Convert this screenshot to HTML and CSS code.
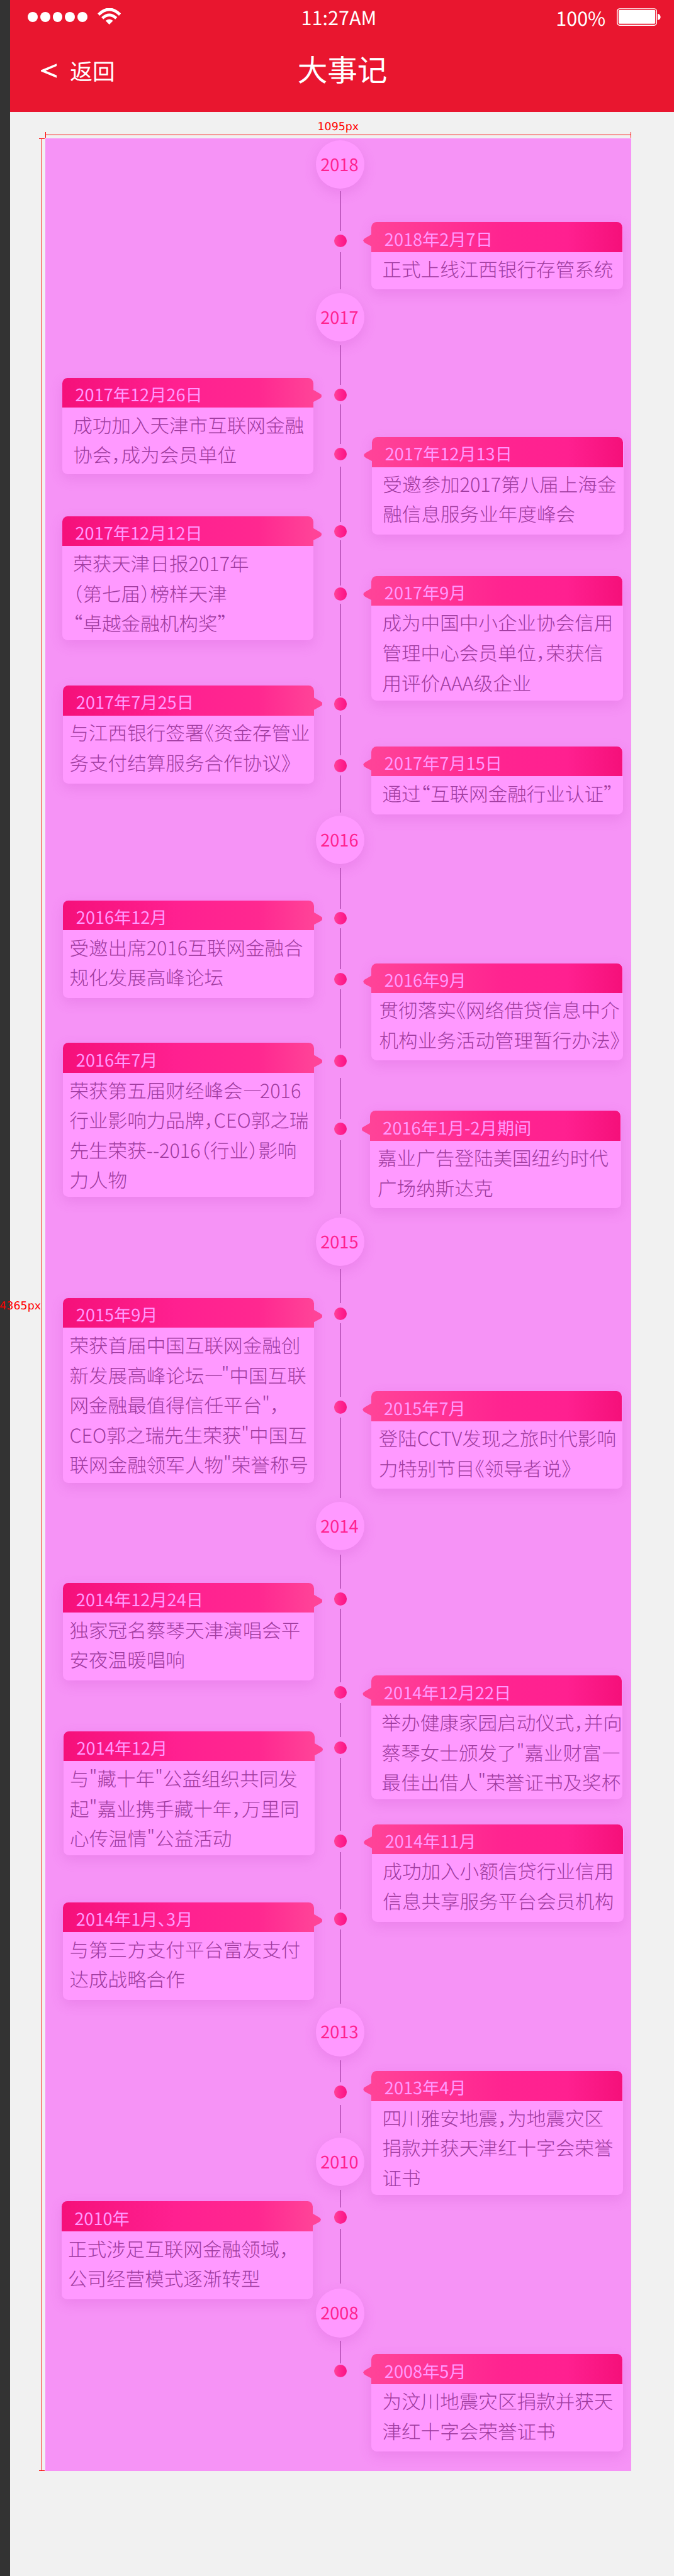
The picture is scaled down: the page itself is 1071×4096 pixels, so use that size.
FILE: index.html
```html
<!DOCTYPE html>
<html lang="zh-CN">
<head>
<meta charset="utf-8">
<title>大事记</title>
<link rel="stylesheet" href="styles.css">
</head>
<body>
<div class="edge"></div>
<div class="screen">
  <header class="topbar">
    <div class="status">
      <div class="signal">
        <i></i><i></i><i></i><i></i><i></i>
        <svg class="wifi" viewBox="0 0 44 31">
          <path d="M2 12 Q22 -7.500 42 12" fill="none" stroke="#fff" stroke-width="5.600"/>
          <path d="M9 18.800 Q22 6.600 35 18.800" fill="none" stroke="#fff" stroke-width="5.400"/>
          <path d="M15 23.500 Q22 17.500 29 23.500 L22 30.500 Z" fill="#fff"/>
        </svg>
      </div>
      <div class="clock">11:27AM</div>
      <div class="power">
        <span>100%</span>
        <svg class="battery" viewBox="0 0 83 33">
          <rect x="1" y="1" width="73.500" height="31" rx="4.500" fill="none" stroke="#fff" stroke-width="1.700"/>
          <rect x="3.500" y="3.600" width="68.500" height="25.400" rx="1.500" fill="#fff"/>
          <path d="M76.500 10.500 A5.500 6 0 0 1 76.500 22.500 Z" fill="#fff"/>
        </svg>
      </div>
    </div>
    <nav class="nav">
      <div class="back">
        <svg class="chevron" viewBox="0 0 30 27"><polyline points="33,1 3,13.500 33,26" fill="none" stroke="#fff" stroke-width="4.300"/></svg>
        <span>返回</span>
      </div>
      <h1>大事记</h1>
    </nav>
  </header>

  <div class="ruler-x"><span>1095px</span><div class="bar"></div></div>

  <div class="stage">
    <div class="ruler-y"><span>4365px</span></div>
    <main class="timeline">
      <section class="col left">
        <article class="card"><h2>2017年12月26日</h2><p>成功加入天津市互联网金融<br>协会，成为会员单位</p></article>
        <article class="card"><h2>2017年12月12日</h2><p>荣获天津日报2017年<br>（第七届）榜样天津<br>“卓越金融机构奖”</p></article>
        <article class="card near"><h2>2017年7月25日</h2><p>与江西银行签署《资金存管业<br>务支付结算服务合作协议》</p></article>
        <article class="card near"><h2>2016年12月</h2><p>受邀出席2016互联网金融合<br>规化发展高峰论坛</p></article>
        <article class="card near"><h2>2016年7月</h2><p>荣获第五届财经峰会<b>—</b>2016<br>行业影响力品牌，CEO郭之瑞<br>先生荣获--2016（行业）影响<br>力人物</p></article>
        <article class="card near"><h2>2015年9月</h2><p>荣获首届中国互联网金融创<br>新发展高峰论坛<b>—</b>"中国互联<br>网金融最值得信任平台"，<br>CEO郭之瑞先生荣获"中国互<br>联网金融领军人物"荣誉称号</p></article>
        <article class="card near"><h2>2014年12月24日</h2><p>独家冠名蔡琴天津演唱会平<br>安夜温暖唱响</p></article>
        <article class="card near"><h2>2014年12月</h2><p>与"藏十年"公益组织共同发<br>起"嘉业携手藏十年，万里同<br>心传温情"公益活动</p></article>
        <article class="card near"><h2>2014年1月、3月</h2><p>与第三方支付平台富友支付<br>达成战略合作</p></article>
        <article class="card near"><h2>2010年</h2><p>正式涉足互联网金融领域，<br>公司经营模式逐渐转型</p></article>
      </section>

      <section class="axis">
        <div class="year">2018</div><i class="seg"></i><i class="dot"></i><i class="seg"></i>
        <div class="year">2017</div><i class="seg"></i><i class="dot"></i><i class="seg"></i><i class="dot"></i><i class="seg"></i><i class="dot"></i><i class="seg"></i><i class="dot"></i><i class="seg"></i><i class="dot"></i><i class="seg"></i><i class="dot"></i><i class="seg"></i>
        <div class="year">2016</div><i class="seg"></i><i class="dot"></i><i class="seg"></i><i class="dot"></i><i class="seg"></i><i class="dot"></i><i class="seg"></i><i class="dot"></i><i class="seg"></i>
        <div class="year">2015</div><i class="seg"></i><i class="dot"></i><i class="seg"></i><i class="dot"></i><i class="seg"></i>
        <div class="year">2014</div><i class="seg"></i><i class="dot"></i><i class="seg"></i><i class="dot"></i><i class="seg"></i><i class="dot"></i><i class="seg"></i><i class="dot"></i><i class="seg"></i><i class="dot"></i><i class="seg"></i>
        <div class="year">2013</div><i class="seg"></i><i class="dot"></i><i class="seg"></i>
        <div class="year">2010</div><i class="seg"></i><i class="dot"></i><i class="seg"></i>
        <div class="year">2008</div><i class="seg"></i><i class="dot"></i>
      </section>

      <section class="col right">
        <article class="card"><h2>2018年2月7日</h2><p>正式上线江西银行存管系统</p></article>
        <article class="card"><h2>2017年12月13日</h2><p>受邀参加2017第八届上海金<br>融信息服务业年度峰会</p></article>
        <article class="card"><h2>2017年9月</h2><p>成为中国中小企业协会信用<br>管理中心会员单位，荣获信<br>用评价AAA级企业</p></article>
        <article class="card"><h2>2017年7月15日</h2><p>通过“互联网金融行业认证”</p></article>
        <article class="card near"><h2>2016年9月</h2><p>贯彻落实《网络借贷信息中介<br>机构业务活动管理暂行办法》</p></article>
        <article class="card near"><h2>2016年1月-2月期间</h2><p>嘉业广告登陆美国纽约时代<br>广场纳斯达克</p></article>
        <article class="card near"><h2>2015年7月</h2><p>登陆CCTV发现之旅时代影响<br>力特别节目《领导者说》</p></article>
        <article class="card"><h2>2014年12月22日</h2><p>举办健康家园启动仪式，并向<br>蔡琴女士颁发了"嘉业财富<b>—</b><br>最佳出借人"荣誉证书及奖杯</p></article>
        <article class="card"><h2>2014年11月</h2><p>成功加入小额信贷行业信用<br>信息共享服务平台会员机构</p></article>
        <article class="card"><h2>2013年4月</h2><p>四川雅安地震，为地震灾区<br>捐款并获天津红十字会荣誉<br>证书</p></article>
        <article class="card"><h2>2008年5月</h2><p>为汶川地震灾区捐款并获天<br>津红十字会荣誉证书</p></article>
      </section>
    </main>
  </div>
</div>
</body>
</html>
```

FILE: styles.css
```css
/* 1rem = 100 design pixels */
html { font-size: 84.965px; }
* { box-sizing: border-box; margin: 0; padding: 0; }
body {
  display: flex;
  width: 1071px;
  height: 4096px;
  overflow: hidden;
  background: #f1f1f1;
  font-family: "Noto Sans CJK SC", "Noto Sans", sans-serif;
  font-size: .36rem;
  text-rendering: geometricPrecision;
}
i { display: block; }
svg { display: block; }

.edge { flex: none; width: .19rem; background: #333; }
.screen { flex: 1; min-width: 0; }

/* top bar */
.topbar { height: 2.09rem; background: #e9162f; color: #fff; }
.status { display: grid; grid-template-columns: 1fr auto 1fr; height: .68rem; padding: 0 .24rem 0 .33rem; }
.signal { display: flex; align-items: flex-start; gap: .045rem; padding-top: .22rem; }
.signal i { width: .187rem; height: .187rem; border-radius: 50%; background: #fff; }
.wifi { width: .44rem; height: .31rem; margin: -.07rem 0 0 .14rem; }
.clock { line-height: .52rem; padding-top: .063rem; margin-right: .21rem; }
.power { display: flex; justify-content: flex-end; gap: .21rem; line-height: .52rem; padding-top: .065rem; }
.battery { width: .83rem; height: .33rem; margin-top: .083rem; }
.nav { display: grid; grid-template-columns: 1fr auto 1fr; align-items: start; padding: 0 0 0 .57rem; }
.back { display: flex; align-items: flex-start; gap: .25rem; font-size: .42rem; line-height: .6rem; padding-top: .34rem; }
.chevron { width: .3rem; height: .27rem; margin-top: .17rem; }
.nav h1 { font-size: .56rem; font-weight: 400; line-height: .8rem; padding-top: .205rem; margin-right: .56rem; }

/* measurement rulers */
.ruler-x, .ruler-y { color: #f00; font: .205rem/.24rem "DejaVu Sans", sans-serif; }
.ruler-x { height: .5rem; padding: .172rem .8rem 0 .653rem; text-align: center; }
.ruler-x span { display: block; }
.ruler-x .bar { height: .11rem; margin-top: -.03rem; border: solid #f00; border-width: 0 1px; background: linear-gradient(#f00, #f00) center / 100% 1px no-repeat; }
.stage { display: flex; }
.ruler-y {
  position: relative;
  flex: none;
  width: .11rem;
  margin: 0 .01rem 0 .54rem;
  border: solid #f00;
  border-width: 1px 0;
  background: linear-gradient(#f00, #f00) center / 1px 100% no-repeat;
}
.ruler-y span { position: absolute; right: .075rem; top: 21.73rem; }

/* timeline */
.timeline { display: flex; width: 10.95rem; height: 43.65rem; background: #f693f6; overflow: hidden; }
.col { display: flow-root; }
.col.left { width: 5.053rem; padding-left: .332rem; }
.col.right { flex: 1; padding-left: .137rem; }
.card {
  position: relative;
  width: 4.695rem;
  border-radius: .1rem;
  background: #f9f;
  box-shadow: 0 .08rem .24rem rgba(190, 60, 190, .2);
}
.card h2 {
  height: .56rem;
  padding: .026rem 0 0 .24rem;
  border-radius: .1rem .1rem 0 0;
  color: #f9f;
  font-size: .32rem;
  font-weight: 400;
  line-height: .56rem;
  font-feature-settings: "halt";
}
.card p {
  padding: .043rem 0 0 .2rem;
  color: #a03ca0;
  font-weight: 300;
  line-height: .56rem;
  white-space: nowrap;
  font-feature-settings: "halt";
}
.card p b { font-weight: 300; letter-spacing: -.04rem; }
.card.near p { padding-left: .118rem; }
.left h2 { background: linear-gradient(90deg, #f5107a, #ff2090 45%, #ff2890 78%, #ff4398); }
.right h2 { background: linear-gradient(270deg, #f5107a, #ff2090 22%, #ff2490 48%, #ff4398); }
.right .card { width: 4.7rem; }
.right .card h2 { width: 4.69rem; }
.right .card p { padding-top: .036rem; }
.right .card.near p { padding-left: .142rem; }

/* speech pointers */
.card::after {
  content: "";
  position: absolute;
  top: .225rem;
  width: .16rem;
  height: .23rem;
  background: #ff4398;
}
.left .card::after { left: 4.69rem; clip-path: polygon(0 0, 70% 28%, 92% 38%, 100% 50%, 92% 64%, 70% 74%, 0 100%); }
.right .card::after { right: 4.695rem; clip-path: polygon(100% 0, 30% 28%, 8% 38%, 0 50%, 8% 64%, 30% 74%, 100% 100%); }

/* vertical rhythm of the cards */
.left .card:nth-child(1) { margin: 4.48rem 0 0 -.015rem; height: 1.81rem; }
.left .card:nth-child(2) { margin: .78rem 0 0 -.015rem; height: 2.32rem; }
.left .card:nth-child(3) { margin-top: .85rem; height: 1.83rem; }
.left .card:nth-child(4) { margin-top: 2.19rem; height: 1.83rem; }
.left .card:nth-child(5) { margin-top: .84rem; height: 2.88rem; }
.left .card:nth-child(6) { margin-top: 1.89rem; height: 3.46rem; }
.left .card:nth-child(7) { margin-top: 1.87rem; height: 1.83rem; }
.left .card:nth-child(8) { margin: .95rem 0 0 .008rem; height: 2.32rem; }
.left .card:nth-child(9) { margin-top: .88rem; height: 1.83rem; }
.left .card:nth-child(10) { margin: 3.77rem 0 0 -.03rem; height: 1.83rem; }

.right .card:nth-child(1) { margin-top: 1.57rem; height: 1.26rem; }
.right .card:nth-child(2) { margin: 2.76rem 0 0 .01rem; height: 1.82rem; }
.right .card:nth-child(3) { margin-top: .78rem; height: 2.33rem; }
.right .card:nth-child(4) { margin-top: .86rem; height: 1.27rem; }
.right .card:nth-child(5) { margin-top: 2.79rem; height: 1.82rem; }
.right .card:nth-child(6) { margin: .94rem 0 0 -.03rem; height: 1.82rem; }
.right .card:nth-child(7) { margin: 3.43rem 0 0 -.01rem; height: 1.82rem; }
.right .card:nth-child(8) { margin: 3.5rem 0 0 -.01rem; height: 2.32rem; }
.right .card:nth-child(9) { margin: .46rem 0 0 .01rem; height: 1.83rem; }
.right .card:nth-child(10) { margin-top: 2.79rem; height: 2.32rem; }
.right .card:nth-child(11) { margin-top: 2.98rem; height: 1.82rem; }

/* central axis */
.axis { display: flex; flex-direction: column; align-items: center; flex: none; width: .91rem; }
.axis > * { flex: none; margin-top: var(--gap, .07rem); }
.year {
  width: .91rem;
  height: .91rem;
  border-radius: 50%;
  background: #f9f;
  box-shadow: 0 .08rem .24rem rgba(190, 60, 190, .2);
  color: #ff2290;
  font-size: .32rem;
  line-height: .885rem;
  text-align: center;
  text-indent: -.02rem;
}
.dot { position: relative; left: .01rem; width: .24rem; height: .24rem; border-radius: 50%; background: linear-gradient(90deg, #ff4398, #ff2290 55%, #fa1482); }
.seg { position: relative; left: .007rem; width: .03rem; height: var(--len); background: #c25cc2; }

.axis > :nth-child(1) { --gap: .03rem; }
.axis > :nth-child(2) { --gap: .05rem; --len: .74rem; }
.axis > :nth-child(4) { --gap: .09rem; --len: .7rem; }
.axis > :nth-child(5) { --gap: .06rem; }
.axis > :nth-child(6) { --len: .74rem; }
.axis > :nth-child(8) { --gap: .06rem; --len: .74rem; }
.axis > :nth-child(10) { --gap: .11rem; --len: 1.04rem; }
.axis > :nth-child(11) { --gap: .06rem; }
.axis > :nth-child(12) { --gap: .04rem; --len: .85rem; }
.axis > :nth-child(13) { --gap: .04rem; }
.axis > :nth-child(14) { --gap: .06rem; --len: 1.73rem; }
.axis > :nth-child(15) { --gap: .03rem; }
.axis > :nth-child(16) { --gap: .08rem; --len: .76rem; }
.axis > :nth-child(18) { --gap: .06rem; --len: .7rem; }
.axis > :nth-child(19) { --gap: .06rem; }
.axis > :nth-child(20) { --gap: .06rem; --len: .77rem; }
.axis > :nth-child(21) { --gap: .06rem; }
.axis > :nth-child(22) { --len: .76rem; }
.axis > :nth-child(24) { --len: 1.1rem; }
.axis > :nth-child(25) { --gap: .12rem; }
.axis > :nth-child(26) { --gap: .2rem; --len: .76rem; }
.axis > :nth-child(28) { --gap: .09rem; --len: 1.38rem; }
.axis > :nth-child(30) { --gap: .06rem; --len: .63rem; }
.axis > :nth-child(31) { --gap: .08rem; }
.axis > :nth-child(32) { --gap: .06rem; --len: 1.38rem; }
.axis > :nth-child(34) { --len: 1.51rem; }
.axis > :nth-child(36) { --gap: .08rem; --len: .64rem; }
.axis > :nth-child(38) { --gap: .06rem; --len: 1.38rem; }
.axis > :nth-child(40) { --gap: .08rem; --len: .63rem; }
.axis > :nth-child(41) { --gap: .08rem; }
.axis > :nth-child(42) { --len: 1.37rem; }
.axis > :nth-child(44) { --gap: .09rem; --len: 1.07rem; }
.axis > :nth-child(45) { --gap: .06rem; }
.axis > :nth-child(46) { --len: 1.4rem; }
.axis > :nth-child(48) { --len: .41rem; }
.axis > :nth-child(50) { --gap: .12rem; --len: .53rem; }
.axis > :nth-child(51) { --gap: .08rem; }
.axis > :nth-child(52) { --len: .33rem; }
.axis > :nth-child(53) { --gap: .06rem; }
.axis > :nth-child(54) { --gap: .1rem; --len: 1.02rem; }
.axis > :nth-child(55) { --gap: .1rem; }
.axis > :nth-child(56) { --len: .42rem; }
.axis > :nth-child(57) { --gap: .02rem; }
```
